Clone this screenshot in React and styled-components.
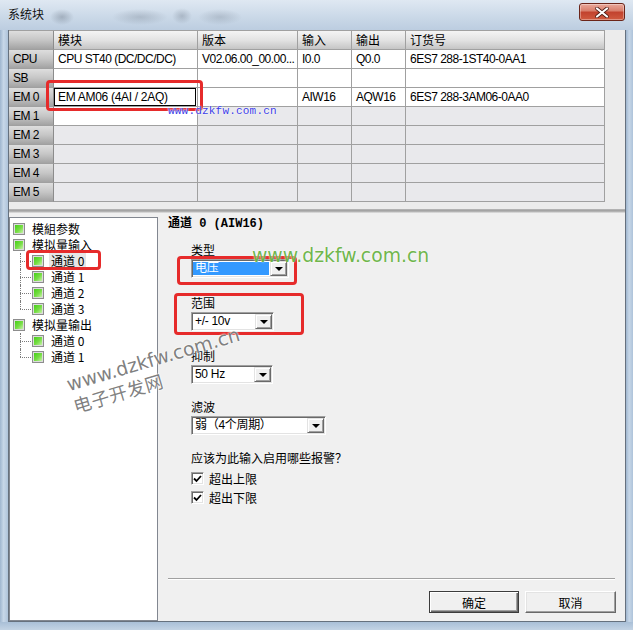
import React from "react";
import styled, { createGlobalStyle, css } from "styled-components";

const GlobalStyle = createGlobalStyle`
  html, body {
    margin: 0;
    padding: 0;
  }
  body {
    width: 633px;
    height: 630px;
    overflow: hidden;
    font-family: "Liberation Sans", "Noto Sans CJK SC", sans-serif;
    font-size: 12px;
    color: #000;
  }
`;

const cjk = `"Noto Sans CJK SC", sans-serif`;

const Window = styled.div`
  position: relative;
  width: 633px;
  height: 630px;
  display: grid;
  grid-template-columns: 8px 618px 7px;
  grid-template-rows: 30px 592px 8px;
  background: #bfd0e2;
  overflow: hidden;
`;

const TitleBar = styled.div`
  grid-column: 1 / 4;
  display: flex;
  align-items: flex-start;
  justify-content: space-between;
  padding: 0 8px;
  background:
    radial-gradient(ellipse 12px 8px at 62px 17px, rgba(70, 80, 95, 0.3), transparent),
    radial-gradient(ellipse 28px 8px at 140px 17px, rgba(70, 80, 95, 0.22), transparent),
    radial-gradient(ellipse 10px 8px at 182px 16px, rgba(70, 80, 95, 0.25), transparent),
    radial-gradient(ellipse 22px 8px at 220px 17px, rgba(70, 80, 95, 0.2), transparent),
    linear-gradient(180deg, #dfe8f2 0%, #cbd9e8 55%, #bccde0 100%);
`;

const Title = styled.span`
  margin-top: 7px;
  font-family: ${cjk};
  font-size: 12px;
  line-height: 14px;
  color: #111;
`;

const CloseButton = styled.div`
  margin-top: 3px;
  width: 46px;
  height: 18px;
  box-sizing: border-box;
  border: 1px solid #6b2519;
  border-radius: 3px;
  display: flex;
  align-items: center;
  justify-content: center;
  background: linear-gradient(180deg, #eaa99b 0%, #d9806d 42%, #c2432e 52%, #d05b40 100%);
  box-shadow: inset 0 0 0 1px rgba(255, 255, 255, 0.35);
`;

const SideFrame = styled.div`
  background: linear-gradient(90deg, #9fb6cf 0%, #c7d7e8 45%, #aec3da 100%);
`;

const BottomFrame = styled.div`
  grid-column: 1 / 4;
  background: linear-gradient(180deg, #a9bfd7 0%, #c3d3e4 100%);
`;

const Content = styled.div`
  display: flex;
  flex-direction: column;
  min-height: 0;
  background: #f0f0f0;
  border: 1px solid #66717e;
  border-top: none;
`;

/* ---------- module table ---------- */

const GridArea = styled.div`
  height: 179px;
  flex-shrink: 0;
  background: #ececec;
`;

const Table = styled.div`
  display: grid;
  grid-template-columns: 45px 144px 100px 54px 54px 199px;
  grid-auto-rows: 19px;
  width: 596px;
  border-top: 1px solid #a0a0a0;
`;

const Cell = styled.div`
  box-sizing: border-box;
  border-right: 1px solid #a0a0a0;
  border-bottom: 1px solid #a0a0a0;
  padding-left: 4px;
  line-height: 18px;
  white-space: nowrap;
  overflow: hidden;
  letter-spacing: -0.5px;
  background: ${({ $filled }) => ($filled ? "#ffffff" : "#e9e9ec")};
`;

const HeadCell = styled(Cell)`
  font-family: ${cjk};
  letter-spacing: 0;
  background: linear-gradient(180deg, #f4f4f4 0%, #e3e3e3 50%, #c5c5c5 100%);
`;

const RowHead = styled(Cell)`
  border-right-color: #8c8c8c;
  background: linear-gradient(180deg, #dedede 0%, #c6c6c6 50%, #a3a3a3 100%);
`;

const EditBox = styled.div`
  box-sizing: border-box;
  margin-left: -4px;
  width: 142px;
  height: 18px;
  border: 1px solid #000;
  background: #fff;
  padding-left: 3px;
  line-height: 16px;
  letter-spacing: -0.3px;
`;

const Splitter = styled.div`
  height: 4px;
  flex-shrink: 0;
  background: linear-gradient(180deg, #b9b9b9 0%, #9d9d9d 50%, #c9c9c9 75%, #e2e2e2 100%);
`;

/* ---------- lower part ---------- */

const Lower = styled.div`
  flex: 1;
  display: flex;
  min-height: 0;
`;

const TreePanel = styled.div`
  width: 149px;
  margin-top: 4px;
  box-sizing: border-box;
  border: 1px solid #828790;
  background: #fff;
  padding-top: 3px;
`;

const TreeRow = styled.div`
  position: relative;
  display: flex;
  align-items: center;
  gap: 7px;
  height: 16px;
  padding-left: ${({ $child }) => ($child ? 22 : 3)}px;
  font-family: ${cjk};
  white-space: nowrap;

  ${({ $child, $last }) =>
    $child &&
    css`
      &::before {
        content: "";
        position: absolute;
        left: 10px;
        top: 8px;
        width: 11px;
        border-top: 1px dotted #7a7a7a;
      }
      &::after {
        content: "";
        position: absolute;
        left: 10px;
        top: 0;
        height: ${$last ? "8px" : "16px"};
        border-left: 1px dotted #7a7a7a;
      }
    `}
`;

const TreeIcon = styled.span`
  width: 12px;
  height: 12px;
  box-sizing: border-box;
  flex-shrink: 0;
  border: 1px solid #8d8d8d;
  padding: 1px;
  background: #dcdcdc;

  &::after {
    content: "";
    display: block;
    width: 100%;
    height: 100%;
    background: linear-gradient(135deg, #47cf18 0%, #78de46 55%, #c8f1ab 100%);
  }
`;

const TreeLabel = styled.span`
  line-height: 16px;
  padding: 0 2px;
  margin-left: -2px;
  background: ${({ $selected }) => ($selected ? "#e6e6e6" : "transparent")};
`;

const RightPanel = styled.div`
  flex: 1;
  display: flex;
  flex-direction: column;
  padding: 4px 10px 8px 10px;
`;

const SectionTitle = styled.div`
  font-family: "Liberation Mono", "Noto Sans CJK SC", monospace;
  font-weight: bold;
  font-size: 12px;
  line-height: 14px;
`;

const Form = styled.div`
  display: flex;
  flex-direction: column;
  align-items: flex-start;
  margin-left: 23px;
`;

const FieldLabel = styled.div`
  margin-top: ${({ $gap }) => $gap}px;
  margin-bottom: 2px;
  font-family: ${cjk};
  line-height: 14px;
`;

const Combo = styled.div`
  display: flex;
  width: ${({ $width }) => $width}px;
  height: 19px;
  box-sizing: border-box;
  padding: 1px;
  border: 1px solid;
  border-color: #a0a0a0 #ffffff #ffffff #a0a0a0;
  box-shadow: inset 1px 1px 0 #696969, inset -1px -1px 0 #e3e3e3;
  background: #fff;
`;

const ComboValue = styled.div`
  flex: 1;
  margin: ${({ $selected }) => ($selected ? "1px 1px 1px 0" : "0 1px 0 0")};
  padding-left: 2px;
  line-height: ${({ $selected }) => ($selected ? 13 : 15)}px;
  white-space: nowrap;
  overflow: hidden;
  letter-spacing: -0.3px;
  background: ${({ $selected }) => ($selected ? "#3399ff" : "transparent")};
  color: ${({ $selected }) => ($selected ? "#fff" : "#000")};
`;

const ComboButton = styled.div`
  width: 17px;
  box-sizing: border-box;
  display: flex;
  align-items: center;
  justify-content: center;
  background: #f0f0f0;
  border: 1px solid;
  border-color: #e3e3e3 #696969 #696969 #e3e3e3;
  box-shadow: inset 1px 1px 0 #fff, inset -1px -1px 0 #a0a0a0;
`;

const ArrowDown = styled.span`
  width: 0;
  height: 0;
  margin-top: 1px;
  border-left: 4px solid transparent;
  border-right: 4px solid transparent;
  border-top: 4px solid #000;
`;

const Question = styled.div`
  margin-top: 16px;
  margin-bottom: 4px;
  font-family: ${cjk};
  line-height: 14px;
`;

const CheckRow = styled.label`
  display: flex;
  align-items: center;
  gap: 5px;
  height: 19px;
  font-family: ${cjk};
`;

const CheckBox = styled.span`
  width: 13px;
  height: 13px;
  box-sizing: border-box;
  display: flex;
  align-items: center;
  justify-content: center;
  border: 1px solid;
  border-color: #a0a0a0 #ffffff #ffffff #a0a0a0;
  box-shadow: inset 1px 1px 0 #696969, inset -1px -1px 0 #e3e3e3;
  background: #fff;
`;

const Separator = styled.div`
  margin-top: auto;
  border-top: 1px solid #a0a0a0;
  border-bottom: 1px solid #ffffff;
`;

const ButtonRow = styled.div`
  display: flex;
  justify-content: flex-end;
  gap: 6px;
  margin-top: 11px;
  margin-right: -1px;
`;

const DialogButton = styled.button`
  width: ${({ $width }) => $width}px;
  height: 22px;
  box-sizing: border-box;
  padding: 0;
  font-family: ${cjk};
  font-size: 12px;
  color: #000;
  background: #f0f0f0;
  border: 1px solid;
  border-color: ${({ $primary }) => ($primary ? "#3c3c3c" : "#ffffff #696969 #696969 #ffffff")};
  box-shadow: ${({ $primary }) =>
    $primary
      ? "inset 1px 1px 0 #fff, inset -1px -1px 0 #696969, inset -2px -2px 0 #a0a0a0"
      : "inset -1px -1px 0 #a0a0a0, inset 1px 1px 0 #e3e3e3"};
`;

/* ---------- overlays ---------- */

const Callout = styled.div`
  position: absolute;
  left: ${({ $x }) => $x}px;
  top: ${({ $y }) => $y}px;
  width: ${({ $w }) => $w}px;
  height: ${({ $h }) => $h}px;
  box-sizing: border-box;
  border: 3px solid #e62b2b;
  border-radius: 4px;
  pointer-events: none;
`;

const WatermarkSmall = styled.div`
  position: absolute;
  left: 168px;
  top: 105px;
  font-family: "Liberation Mono", monospace;
  font-size: 11px;
  line-height: 12px;
  letter-spacing: 0.2px;
  color: #3b3be6;
  text-shadow: 0 0 1px #fff, 0 0 2px #fff;
`;

const WatermarkGreen = styled.div`
  position: absolute;
  left: 252px;
  top: 245px;
  font-family: "DejaVu Sans", sans-serif;
  font-size: 18.8px;
  line-height: 22px;
  color: rgba(98, 176, 58, 0.92);
  text-shadow: 0 0 2px rgba(255, 255, 255, 0.9);
`;

const WatermarkStamp = styled.div`
  position: absolute;
  left: 64px;
  top: 374px;
  transform: rotate(-16.5deg);
  transform-origin: 0 0;
  white-space: nowrap;
  color: rgba(105, 105, 105, 0.85);
  text-shadow: 0 0 2px #fff, 0 0 2px #fff;
  pointer-events: none;
`;

const StampLine = styled.div`
  font-family: ${({ $cjk }) => ($cjk ? cjk : `"DejaVu Sans", sans-serif`)};
  font-size: ${({ $size }) => $size}px;
  letter-spacing: ${({ $cjk }) => ($cjk ? "0.6px" : "0")};
  line-height: 22px;
`;

/* ---------- data ---------- */

const rows = [
  { id: "CPU", cells: ["CPU ST40 (DC/DC/DC)", "V02.06.00_00.00...", "I0.0", "Q0.0", "6ES7 288-1ST40-0AA1"], filled: 5 },
  { id: "SB", cells: ["", "", "", "", ""], filled: 5 },
  { id: "EM 0", cells: ["EM AM06 (4AI / 2AQ)", "", "AIW16", "AQW16", "6ES7 288-3AM06-0AA0"], filled: 5, editing: true },
  { id: "EM 1", cells: ["", "", "", "", ""], filled: 1 },
  { id: "EM 2", cells: ["", "", "", "", ""], filled: 0 },
  { id: "EM 3", cells: ["", "", "", "", ""], filled: 0 },
  { id: "EM 4", cells: ["", "", "", "", ""], filled: 0 },
  { id: "EM 5", cells: ["", "", "", "", ""], filled: 0 },
];

const headers = ["模块", "版本", "输入", "输出", "订货号"];

const tree = [
  { label: "模組参数", children: [] },
  { label: "模拟量输入", children: ["通道 0", "通道 1", "通道 2", "通道 3"], selected: 0 },
  { label: "模拟量输出", children: ["通道 0", "通道 1"] },
];

const callouts = [
  { x: 46, y: 80, w: 157, h: 31 },
  { x: 26, y: 250, w: 75, h: 20 },
  { x: 177, y: 256, w: 120, h: 29 },
  { x: 174, y: 293, w: 130, h: 42 },
];

const fields = [
  { label: "类型", value: "电压", width: 98, gap: 12, selected: true },
  { label: "范围", value: "+/- 10v", width: 83, gap: 18 },
  { label: "抑制", value: "50 Hz", width: 82, gap: 18 },
  { label: "滤波", value: "弱（4个周期）", width: 135, gap: 16 },
];

const Check = () => (
  <svg width="9" height="8" viewBox="0 0 9 8">
    <polyline points="1,3.5 3.5,6 8,1" fill="none" stroke="#000" strokeWidth="1.8" />
  </svg>
);

const CloseGlyph = () => (
  <svg width="14" height="11" viewBox="0 0 14 11">
    <path d="M2 1.5 L12 9.5 M12 1.5 L2 9.5" stroke="#4a1a12" strokeWidth="3.6" strokeLinecap="round" />
    <path d="M2 1.5 L12 9.5 M12 1.5 L2 9.5" stroke="#ffffff" strokeWidth="2.2" strokeLinecap="round" />
  </svg>
);

const App = () => {
  return (
    <>
      <GlobalStyle />
      <Window>
        <TitleBar>
          <Title>系统块</Title>
          <CloseButton>
            <CloseGlyph />
          </CloseButton>
        </TitleBar>

        <SideFrame />
        <Content>
          <GridArea>
            <Table>
              <RowHead />
              {headers.map((h) => (
                <HeadCell key={h}>{h}</HeadCell>
              ))}
              {rows.map((row) => (
                <React.Fragment key={row.id}>
                  <RowHead>{row.id}</RowHead>
                  {row.cells.map((text, i) => (
                    <Cell key={i} $filled={i < row.filled}>
                      {row.editing && i === 0 ? <EditBox>{text}</EditBox> : text}
                    </Cell>
                  ))}
                </React.Fragment>
              ))}
            </Table>
          </GridArea>
          <Splitter />
          <Lower>
            <TreePanel>
              {tree.map((node) => (
                <React.Fragment key={node.label}>
                  <TreeRow>
                    <TreeIcon />
                    <TreeLabel>{node.label}</TreeLabel>
                  </TreeRow>
                  {node.children.map((child, i) => (
                    <TreeRow key={i} $child $last={i === node.children.length - 1}>
                      <TreeIcon />
                      <TreeLabel $selected={node.selected === i}>{child}</TreeLabel>
                    </TreeRow>
                  ))}
                </React.Fragment>
              ))}
            </TreePanel>

            <RightPanel>
              <SectionTitle>通道 0 (AIW16)</SectionTitle>
              <Form>
                {fields.map((f) => (
                  <React.Fragment key={f.label}>
                    <FieldLabel $gap={f.gap}>{f.label}</FieldLabel>
                    <Combo $width={f.width}>
                      <ComboValue $selected={f.selected}>{f.value}</ComboValue>
                      <ComboButton>
                        <ArrowDown />
                      </ComboButton>
                    </Combo>
                  </React.Fragment>
                ))}
                <Question>应该为此输入启用哪些报警？</Question>
                <CheckRow>
                  <CheckBox>
                    <Check />
                  </CheckBox>
                  超出上限
                </CheckRow>
                <CheckRow>
                  <CheckBox>
                    <Check />
                  </CheckBox>
                  超出下限
                </CheckRow>
              </Form>
              <Separator />
              <ButtonRow>
                <DialogButton $primary $width={90}>确定</DialogButton>
                <DialogButton $width={91}>取消</DialogButton>
              </ButtonRow>
            </RightPanel>
          </Lower>
        </Content>
        <SideFrame />
        <BottomFrame />

        {callouts.map((c, i) => (
          <Callout key={i} $x={c.x} $y={c.y} $w={c.w} $h={c.h} />
        ))}
        <WatermarkSmall>www.dzkfw.com.cn</WatermarkSmall>
        <WatermarkGreen>www.dzkfw.com.cn</WatermarkGreen>
        <WatermarkStamp>
          <StampLine $size={19}>www.dzkfw.com.cn</StampLine>
          <StampLine $cjk $size={18}>电子开发网</StampLine>
        </WatermarkStamp>
      </Window>
    </>
  );
};

export default App;
